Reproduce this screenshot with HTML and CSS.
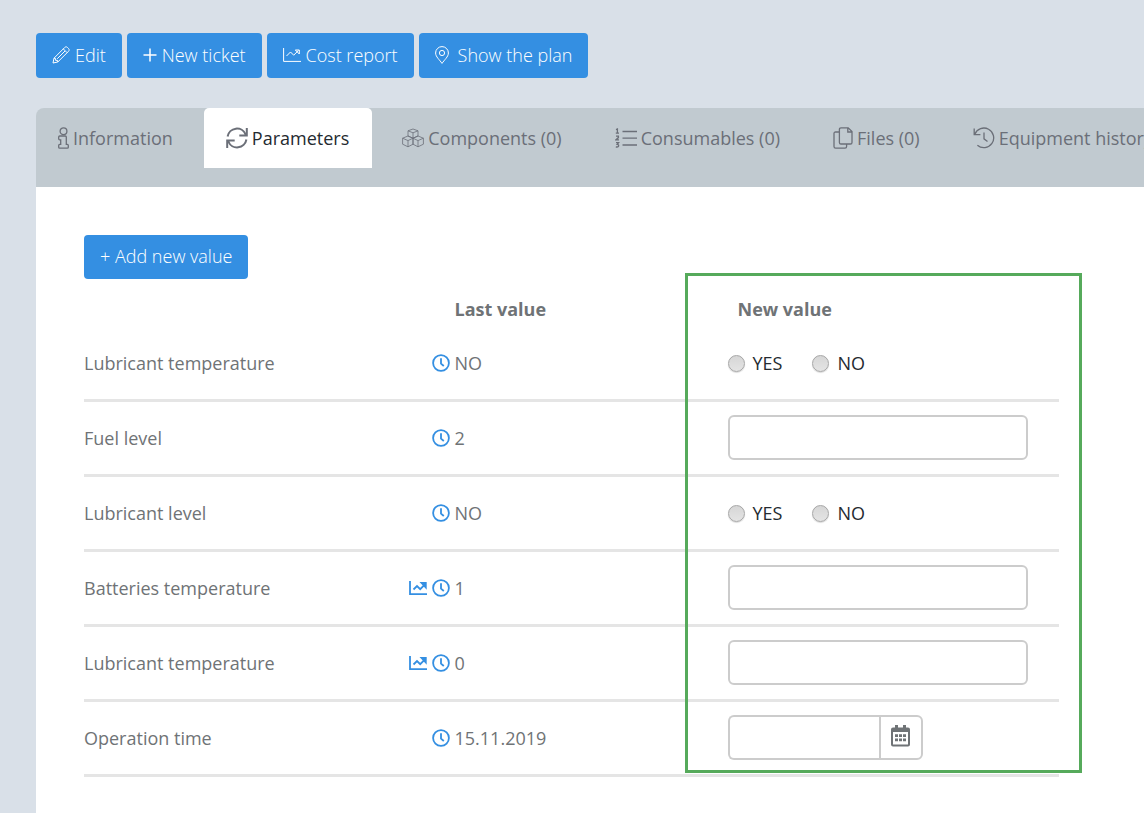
FILE: index.html
```html
<!DOCTYPE html>
<html lang="en">
<head>
    <meta charset="UTF-8">
    <meta name="viewport" content="width=device-width, initial-scale=1.0">
    <title>Equipment parameters</title>
    <link rel="stylesheet" href="styles.css">
</head>
<body>
    <!-- Shared icons -->
    <svg class="sprite" aria-hidden="true">
        <symbol id="icon-clock" viewBox="0 0 18 18">
            <circle cx="9" cy="9" r="7.9"/>
            <path d="M9 4.2V9.6L11.8 12"/>
        </symbol>
        <symbol id="icon-chart" viewBox="0 0 18 18">
            <path d="M1 2V15.2H18M4.5 10.5L8 7L11.2 10.2L15.5 5.8"/>
            <path class="arrow" d="M12.6 4H16.8V8.4Z"/>
        </symbol>
    </svg>

    <div class="toolbar">
        <button type="button" class="btn">
            <svg class="icon" width="18" height="18" viewBox="0 0 18 18">
                <path d="M1 17L2 12.2L12.7 1.5C13.6 .6 14.6 .6 15.5 1.5L16.5 2.5C17.4 3.4 17.4 4.4 16.5 5.3L5.8 16ZM2 12.2L3.6 12.6V14.4H5.5L5.8 16M11.3 2.9L15.1 6.7M5.2 12.8L13 5"/>
            </svg>
            Edit
        </button>
        <button type="button" class="btn">
            <svg class="icon plus" width="14" height="18" viewBox="0 0 14 18">
                <path d="M7 2.5V15.5M.5 9H13.5"/>
            </svg>
            New ticket
        </button>
        <button type="button" class="btn">
            <svg class="icon" width="18" height="18" viewBox="0 0 18 18">
                <path d="M.6 2V15.4H18M3.5 10L7.5 6L10.7 9.2L15.5 4.4M12.3 4H16.3V8Z"/>
            </svg>
            Cost report
        </button>
        <button type="button" class="btn btn-plan">
            <svg class="icon" width="14" height="18" viewBox="0 0 14 18">
                <path d="M7 17.4C4.8 14 .6 10.8 .6 7A6.4 6.4 0 0 1 13.4 7C13.4 10.8 9.2 14 7 17.4Z"/>
                <circle cx="7" cy="7" r="2.6"/>
            </svg>
            Show the plan
        </button>
    </div>

    <nav class="tabs">
        <a href="#" class="tab">
            <svg class="icon" width="11" height="22" viewBox="0 0 11 22">
                <circle cx="5.5" cy="4.2" r="3.4"/>
                <path d="M1.7 9H7.3Q8.3 9 8.3 10V17.4H9.3Q10.3 17.4 10.3 18.4V20.2Q10.3 21.2 9.3 21.2H1.7Q.7 21.2 .7 20.2V18.4Q.7 17.4 1.7 17.4H2.7V12.8H1.7Q.7 12.8 .7 11.8V10Q.7 9 1.7 9Z"/>
            </svg>
            Information
        </a>
        <a href="#" class="tab active">
            <svg class="icon bold" width="22" height="22" viewBox="0 0 22 22">
                <path d="M1.6 9.5A9.4 9.4 0 0 1 19.6 7.5M20.8 1V8.5H13.3M20.4 12.5A9.4 9.4 0 0 1 2.4 14.5M1.2 21V13.5H8.7"/>
            </svg>
            Parameters
        </a>
        <a href="#" class="tab">
            <svg class="icon thin" width="22" height="22" viewBox="0 0 22 22">
                <path d="M11 2L16 3.8V9L11 11.2L6 9V3.8ZM6 3.8L11 5.8L16 3.8M11 5.8V11.2M6 9L11 11.2V17.2L6 19.8L.6 17.2V11.2ZM.6 11.2L6 13.6L11 11.2M6 13.6V19.8M16 9L21.4 11.2V17.2L16 19.8L11 17.2V11.2ZM11 11.2L16 13.6L21.4 11.2M16 13.6V19.8"/>
            </svg>
            Components (0)
        </a>
        <a href="#" class="tab">
            <svg class="icon" width="22" height="22" viewBox="0 0 22 22">
                <path d="M7.5 4.5H22M7.5 11.2H22M7.5 18H22M1 2.6L2.4 2V6M.8 6.2H4M1 9.2H3.4V10.6L1 12.8H4M1 15.6H3.6L2.2 17.4Q3.8 17.4 3.6 19Q3.2 20.4 .8 19.8"/>
            </svg>
            Consumables (0)
        </a>
        <a href="#" class="tab">
            <svg class="icon" width="20" height="22" viewBox="0 0 20 22">
                <path d="M8 .8H15.2L19 4.6V15.4Q19 17 17.4 17H8Q6.4 17 6.4 15.4V2.4Q6.4 .8 8 .8ZM14.8 1V5H18.8M6.4 5H2.6Q1 5 1 6.6V19.6Q1 21.2 2.6 21.2H12Q13.6 21.2 13.6 19.6V17"/>
            </svg>
            Files (0)
        </a>
        <a href="#" class="tab">
            <svg class="icon" width="22" height="22" viewBox="0 0 22 22">
                <path d="M1.2 1.5V7.6H7.4M1.8 7.2A9.8 9.8 0 1 1 4.4 18.2M11 5.5V11.8L14.5 14.4"/>
            </svg>
            Equipment history
        </a>
    </nav>

    <main class="panel">
        <button type="button" class="btn btn-add">+ Add new value</button>

        <form class="parameters">
            <table>
                <colgroup>
                    <col class="col-name">
                    <col class="col-icons">
                    <col class="col-last">
                    <col class="col-new">
                </colgroup>
                <thead>
                    <tr>
                        <td></td>
                        <td></td>
                        <th scope="col">Last value</th>
                        <th scope="col" class="head-new">New value</th>
                    </tr>
                </thead>
                <tbody>
                    <tr>
                        <td>Lubricant temperature</td>
                        <td class="links">
                            <a href="#" aria-label="History"><svg class="icon"><use href="#icon-clock"/></svg></a>
                        </td>
                        <td>NO</td>
                        <td>
                            <div class="choices">
                                <label><input type="radio" name="lubricant-temperature" value="yes">YES</label>
                                <label><input type="radio" name="lubricant-temperature" value="no">NO</label>
                            </div>
                        </td>
                    </tr>
                    <tr>
                        <td><label for="fuelLevel">Fuel level</label></td>
                        <td class="links">
                            <a href="#" aria-label="History"><svg class="icon"><use href="#icon-clock"/></svg></a>
                        </td>
                        <td>2</td>
                        <td class="control"><input type="text" id="fuelLevel" class="field"></td>
                    </tr>
                    <tr>
                        <td>Lubricant level</td>
                        <td class="links">
                            <a href="#" aria-label="History"><svg class="icon"><use href="#icon-clock"/></svg></a>
                        </td>
                        <td>NO</td>
                        <td>
                            <div class="choices">
                                <label><input type="radio" name="lubricant-level" value="yes">YES</label>
                                <label><input type="radio" name="lubricant-level" value="no">NO</label>
                            </div>
                        </td>
                    </tr>
                    <tr>
                        <td><label for="batteries">Batteries temperature</label></td>
                        <td class="links">
                            <a href="#" aria-label="Chart"><svg class="icon"><use href="#icon-chart"/></svg></a>
                            <a href="#" aria-label="History"><svg class="icon"><use href="#icon-clock"/></svg></a>
                        </td>
                        <td>1</td>
                        <td class="control"><input type="text" id="batteries" class="field"></td>
                    </tr>
                    <tr>
                        <td><label for="lubricant">Lubricant temperature</label></td>
                        <td class="links">
                            <a href="#" aria-label="Chart"><svg class="icon"><use href="#icon-chart"/></svg></a>
                            <a href="#" aria-label="History"><svg class="icon"><use href="#icon-clock"/></svg></a>
                        </td>
                        <td>0</td>
                        <td class="control"><input type="text" id="lubricant" class="field"></td>
                    </tr>
                    <tr>
                        <td><label for="operationTime">Operation time</label></td>
                        <td class="links">
                            <a href="#" aria-label="History"><svg class="icon"><use href="#icon-clock"/></svg></a>
                        </td>
                        <td>15.11.2019</td>
                        <td class="control">
                            <div class="date-group">
                                <input type="text" id="operationTime" class="field">
                                <button type="button" aria-label="Choose date">
                                    <svg width="19" height="22" viewBox="0 0 19 22">
                                        <path fill-rule="evenodd" d="M4 0H7V2.5H12V0H15V2.5H17Q19 2.5 19 4.5V19.5Q19 21.5 17 21.5H2Q0 21.5 0 19.5V4.5Q0 2.5 2 2.5H4ZM2 7V19.5H17V7Z"/>
                                        <path d="M4 9.3H7V12H4ZM8 9.3H11V12H8ZM12 9.3H15V12H12ZM4 13.5H7V16.2H4ZM8 13.5H11V16.2H8ZM12 13.5H15V16.2H12Z"/>
                                    </svg>
                                </button>
                            </div>
                        </td>
                    </tr>
                </tbody>
            </table>
            <div class="highlight"></div>
        </form>
    </main>
</body>
</html>
```
FILE: styles.css
```css
* {
    box-sizing: border-box;
}

body {
    display: flex;
    flex-direction: column;
    min-height: 100vh;
    margin: 0;
    padding: 33px 0 0 36px;
    overflow-x: hidden;
    background-color: #d9e0e8;
    color: #6f7376;
    font-family: "Open Sans", sans-serif;
    font-size: 18px;
    line-height: 24px;
}

a {
    color: inherit;
    text-decoration: none;
}

.sprite {
    position: absolute;
    width: 0;
    height: 0;
}

.icon {
    flex: none;
    fill: none;
    stroke: currentColor;
    stroke-width: 1.3;
}

.icon.thin {
    stroke-width: 0.8;
}

.icon.bold {
    stroke-width: 2;
}

/* Buttons */
.toolbar {
    display: flex;
    flex-wrap: wrap;
    gap: 5px;
    margin-bottom: 30px;
}

.btn {
    display: flex;
    align-items: center;
    gap: 5px;
    height: 45px;
    padding: 0 16px 2px;
    border: none;
    border-radius: 4px;
    background-color: #348fe2;
    color: #fff;
    font-family: inherit;
    font-size: 18px;
    font-weight: 300;
    cursor: pointer;
}

.btn:hover {
    background-color: #2a72b5;
}

.btn .icon {
    stroke-width: 1;
}

.btn .icon.plus {
    stroke-width: 1.5;
}

.btn-plan {
    gap: 9px;
}

.btn-add {
    height: 44px;
}

/* Tabs */
.tabs {
    display: flex;
    gap: 8px;
    height: 79px;
    overflow: hidden;
    border-radius: 8px 0 0 0;
    background-color: #c1cad0;
    color: #6b6f78;
    white-space: nowrap;
}

.tab {
    display: flex;
    flex: none;
    align-items: center;
    gap: 4px;
    height: 60px;
    padding: 0 23px 0 22px;
    border-radius: 5px 5px 0 0;
}

.tab.active {
    background-color: #fff;
    color: #242a30;
}

.tab.active .icon {
    color: #6b6f78;
}

/* Parameters */
.panel {
    flex: 1;
    padding: 48px 85px 34px 48px;
    background-color: #fff;
}

.parameters {
    position: relative;
    margin-top: 12px;
}

table {
    width: 100%;
    border-spacing: 0;
    table-layout: fixed;
}

.col-name {
    width: 32%;
}

.col-icons {
    width: 6%;
}

.col-last {
    width: 28%;
}

.col-new {
    width: 34%;
}

th,
td {
    padding: 0;
    text-align: left;
}

thead tr {
    height: 36px;
}

th.head-new {
    padding-left: 10px;
}

tbody td {
    height: 75px;
    border-bottom: 3px solid #e5e5e5;
}

td.control {
    padding-bottom: 2px;
}

.links {
    padding-right: 5px;
    color: #348fe2;
    font-size: 0;
    text-align: right;
}

.links a {
    margin-left: 5px;
}

.links .icon {
    width: 18px;
    height: 18px;
    stroke-width: 1.8;
    vertical-align: middle;
}

.arrow {
    fill: currentColor;
}

.choices {
    display: flex;
    gap: 30px;
    color: #242a30;
}

.choices label {
    display: flex;
    align-items: center;
    gap: 8px;
}

.choices input {
    appearance: none;
    width: 17px;
    height: 17px;
    margin: 0;
    border: 1px solid #a6a6a6;
    border-radius: 50%;
    background: linear-gradient(#d6d6d6, #e4e4e4);
    box-shadow: 0 1px 1px rgba(0, 0, 0, 0.15);
}

.choices input:checked {
    background: radial-gradient(#348fe2 35%, #e4e4e4 40%);
}

.field {
    display: block;
    width: 300px;
    max-width: 100%;
    height: 45px;
    padding: 0 12px;
    border: 2px solid #ccc;
    border-radius: 6px;
    background-color: #fff;
    color: #242a30;
    font-family: inherit;
    font-size: 18px;
}

.date-group {
    display: flex;
}

.date-group .field {
    width: 151px;
    border-right: none;
    border-radius: 6px 0 0 6px;
}

.date-group button {
    display: flex;
    align-items: center;
    justify-content: center;
    width: 44px;
    height: 45px;
    padding: 0 0 2px;
    border: 2px solid #ccc;
    border-radius: 0 6px 6px 0;
    background-color: #fff;
    cursor: pointer;
}

.date-group svg {
    fill: #6f7376;
}

/* Frame around the new value column */
.highlight {
    position: absolute;
    top: -18px;
    right: -23px;
    bottom: 4px;
    left: calc(66% - 43px);
    border: 3px solid #56aa5b;
    pointer-events: none;
}
```
